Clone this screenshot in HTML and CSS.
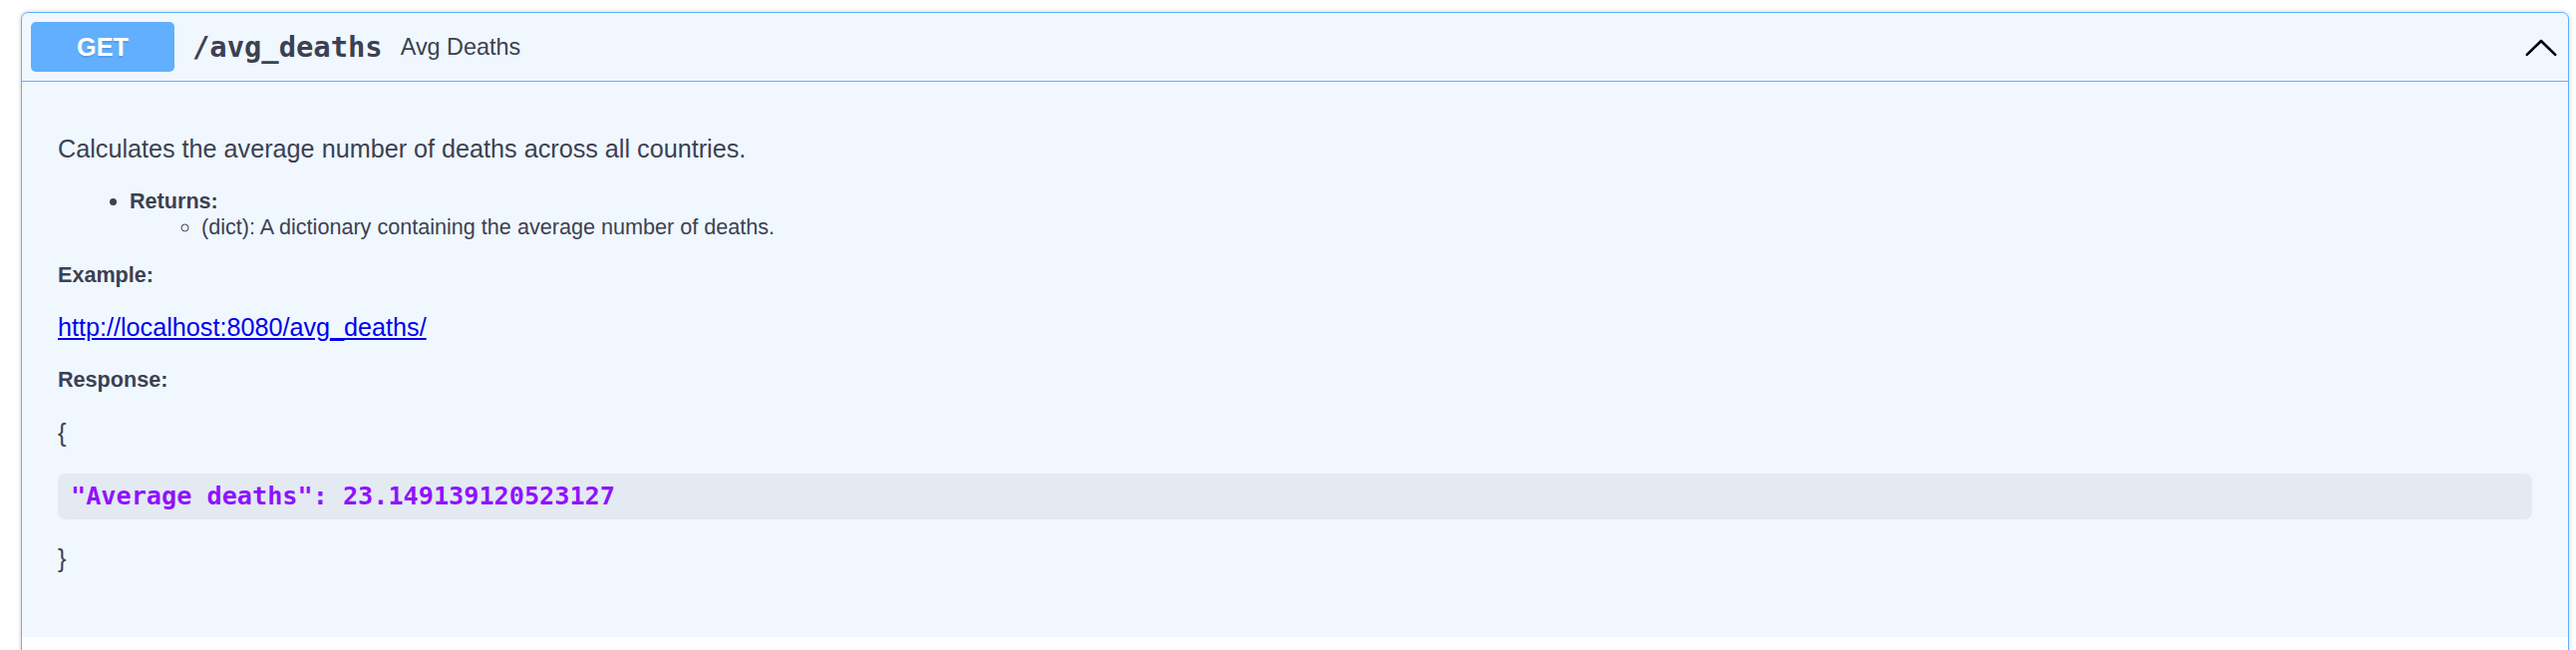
FILE: index.html
```html
<!DOCTYPE html>
<html lang="en">
<head>
<meta charset="utf-8">
<title>Avg Deaths</title>
<link rel="stylesheet" href="styles.css">
</head>
<body>
<div class="wrapper">
  <div class="opblock">
    <div class="summary">
      <span class="method">GET</span>
      <span class="path">/avg_deaths</span>
      <span class="summary-desc">Avg Deaths</span>
      <svg class="arrow" width="36" height="36" viewBox="0 0 20 20" aria-hidden="true">
        <path d="M17.418 14.908c.272.268.709.268.979 0s.271-.701 0-.969l-7.908-7.83c-.27-.268-.707-.268-.979 0l-7.908 7.83c-.27.268-.27.701 0 .969.271.268.709.268.979 0L10 7.717l7.418 7.191z"/>
      </svg>
    </div>
    <div class="body">
      <div class="desc-wrapper">
        <p class="lead">Calculates the average number of deaths across all countries.</p>
        <ul class="list">
          <li><strong>Returns:</strong>
            <ul class="sublist">
              <li>(dict): A dictionary containing the average number of deaths.</li>
            </ul>
          </li>
        </ul>
        <p class="label label-first"><strong>Example:</strong></p>
        <p class="lead"><a class="link" href="#">http://localhost:8080/avg_deaths/</a></p>
        <p class="label"><strong>Response:</strong></p>
        <p class="lead">{</p>
        <pre class="code"><code>"Average deaths": 23.149139120523127</code></pre>
        <p class="lead">}</p>
      </div>
      <div class="section-header"></div>
    </div>
  </div>
</div>
</body>
</html>
```

FILE: styles.css
```css
html, body {
  margin: 0;
  padding: 0;
  background: #ffffff;
}

body {
  font-family: "Liberation Sans", Arial, sans-serif;
  color: #3b4151;
  overflow: hidden;
}

.wrapper {
  padding: 12px 7px 0 21px;
}

.opblock {
  border: 1px solid #61affe;
  border-radius: 7px;
  background: #f0f7ff;
  box-shadow: 0 0 5px rgba(0, 0, 0, 0.19);
  overflow: hidden;
}

.summary {
  display: flex;
  align-items: center;
  padding: 9px;
  border-bottom: 1px solid #61affe;
}

.method {
  display: block;
  min-width: 144px;
  padding: 10.5px 0;
  text-align: center;
  background: #61affe;
  color: #ffffff;
  border-radius: 5px;
  font-size: 25.2px;
  font-weight: 700;
  line-height: 29px;
  text-shadow: 0 2px 0 rgba(0, 0, 0, 0.1);
}

.path {
  padding: 0 18px;
  font-family: "DejaVu Sans Mono", monospace;
  font-weight: 700;
  font-size: 28.8px;
  color: #3b4151;
}

.summary-desc {
  flex: 1;
  font-size: 23.4px;
  color: #3b4151;
}

.arrow {
  flex: none;
  fill: #000000;
}

.desc-wrapper {
  padding: 28px 36px 27px;
  margin-bottom: 12px;
}

.lead {
  font-size: 25.2px;
  margin: 25.2px 0;
}

.label {
  font-size: 21.6px;
  margin: 25.2px 0;
}

.label-first {
  margin-top: 21.6px;
}

.list {
  font-size: 21.6px;
  margin: 25.2px 0 21.6px;
  padding-left: 72px;
}

.sublist {
  list-style-type: circle;
  margin: 0;
  padding-left: 72px;
}

.link {
  color: #0000ee;
  text-decoration: underline;
}

.code {
  margin: 26px 0 25.2px;
  padding: 9px 13px;
  background: rgba(0, 0, 0, 0.05);
  border-radius: 7px;
  font-family: "DejaVu Sans Mono", monospace;
  font-size: 25.2px;
  line-height: 28px;
  font-weight: 700;
  color: #9012fe;
}

.code code {
  font-family: inherit;
}

.section-header {
  height: 160px;
  background: rgba(255, 255, 255, 0.8);
  box-shadow: 0 1px 2px rgba(0, 0, 0, 0.1);
}
```
